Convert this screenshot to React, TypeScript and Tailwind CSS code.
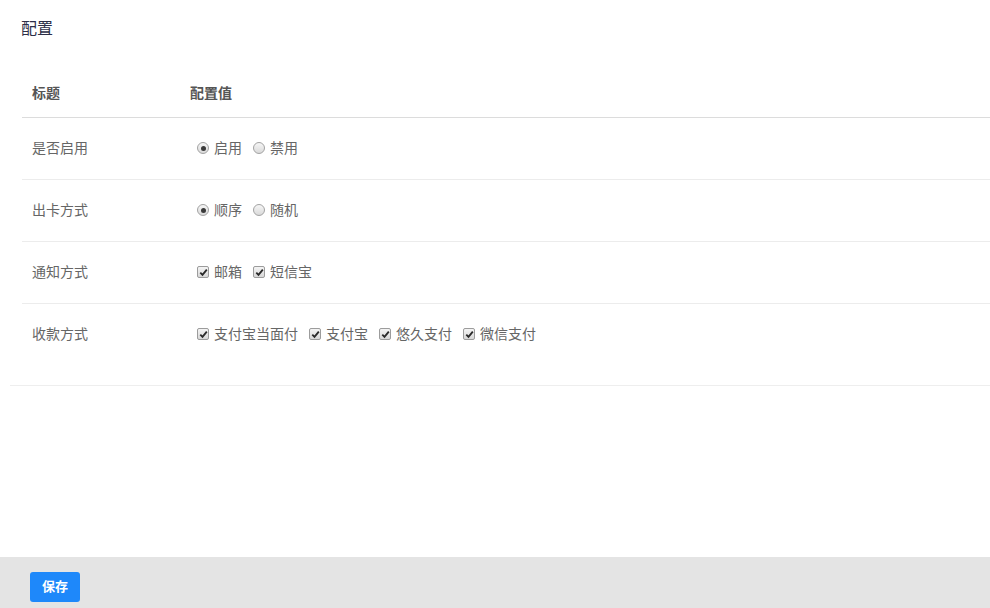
import React from 'react';

const font = { fontFamily: '"Liberation Sans", "Noto Sans CJK SC", sans-serif' };

function Radio({ checked }: { checked?: boolean }) {
  return (
    <span className="inline-flex h-[12px] w-[12px] items-center justify-center rounded-full border border-[#a3a3a3] bg-gradient-to-b from-[#f6f6f6] to-[#dadada]">
      {checked && <span className="h-[5px] w-[5px] rounded-full bg-[#3a3a3a]" />}
    </span>
  );
}

function Check() {
  return (
    <span className="inline-flex h-[12px] w-[12px] items-center justify-center rounded-[2px] border border-[#9c9c9c] bg-gradient-to-b from-[#f4f4f4] to-[#d8d8d8]">
      <svg width="9" height="9" viewBox="0 0 9 9">
        <path d="M1.3 4.6 L3.5 6.9 L7.8 1.6" fill="none" stroke="#2a2a2a" strokeWidth="1.8" />
      </svg>
    </span>
  );
}

function Option({ type, label, checked }: { type: 'radio' | 'check'; label: string; checked?: boolean }) {
  return (
    <label className="mr-[11px] inline-flex items-center gap-[5px]">
      {type === 'radio' ? <Radio checked={checked} /> : <Check />}
      <span>{label}</span>
    </label>
  );
}

const rows: { title: string; type: 'radio' | 'check'; options: { label: string; checked?: boolean }[] }[] = [
  { title: '是否启用', type: 'radio', options: [{ label: '启用', checked: true }, { label: '禁用' }] },
  { title: '出卡方式', type: 'radio', options: [{ label: '顺序', checked: true }, { label: '随机' }] },
  { title: '通知方式', type: 'check', options: [{ label: '邮箱' }, { label: '短信宝' }] },
  {
    title: '收款方式',
    type: 'check',
    options: [{ label: '支付宝当面付' }, { label: '支付宝' }, { label: '悠久支付' }, { label: '微信支付' }],
  },
];

export default function App() {
  return (
    <div className="flex h-[608px] w-full flex-col bg-white text-[14px]" style={font}>
      <div className="flex-1">
        <div className="ml-[10px] border-b border-[#eeeeee] pb-[20px]">
          <h1 className="pl-[11px] pt-[18px] text-[16px] leading-[22px] text-[#2d2f48]">配置</h1>
          <table className="ml-[12px] mt-[31px] w-[calc(100%-12px)] border-collapse">
            <thead>
              <tr className="h-[46px] border-b border-[#dcdcdc] text-left font-bold text-[#555]">
                <th className="w-[168px] pl-[10px] font-bold">标题</th>
                <th className="font-bold">配置值</th>
              </tr>
            </thead>
            <tbody>
              {rows.map((row, i) => (
                <tr
                  key={row.title}
                  className={`h-[62px] ${i < rows.length - 1 ? 'border-b border-[#ececec]' : ''} text-[#666]`}
                >
                  <td className="pl-[10px]">{row.title}</td>
                  <td className="pl-[7px]">
                    <div className="flex items-center">
                      {row.options.map((o) => (
                        <Option key={o.label} type={row.type} label={o.label} checked={o.checked} />
                      ))}
                    </div>
                  </td>
                </tr>
              ))}
            </tbody>
          </table>
        </div>
      </div>
      <div className="h-[51px] bg-[#e4e4e4] pl-[30px] pt-[15px]">
        <button className="h-[30px] w-[50px] rounded-[3px] bg-[#1e88fa] text-[13px] font-bold text-white">保存</button>
      </div>
    </div>
  );
}
